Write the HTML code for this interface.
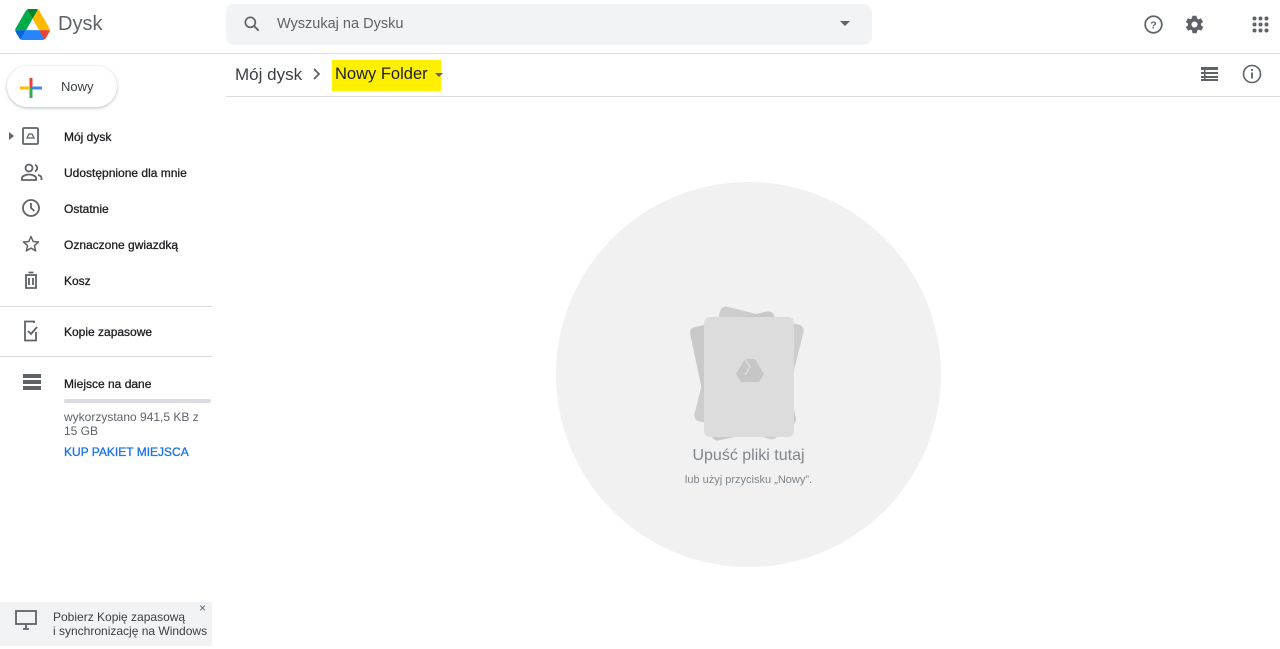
<!DOCTYPE html>
<html><head><meta charset="utf-8"><style>
*{margin:0;padding:0;box-sizing:border-box}
body{width:1280px;height:649px;overflow:hidden;background:#fff;font-family:"Liberation Sans",Arial,sans-serif;color:#3c4043;position:relative}
.abs{position:absolute}
.nav{position:absolute;left:64px;font-size:12px;color:#202124;-webkit-text-stroke:0.3px #202124}
.ic{position:absolute;left:21px}
</style></head><body>
<svg class="abs" style="left:15px;top:9px" width="35" height="31" viewBox="0 0 87 78"><path d="M6.6 66.85l3.85 6.65c.8 1.4 1.95 2.5 3.3 3.3L27.5 53H0c0 1.550.4 3.1 1.2 4.5z" fill="#0066da"/><path d="M43.65 25L29.9 1.2c-1.35.8-2.5 1.9-3.3 3.3L1.2 48.5A9 9 0 000 53h27.5z" fill="#00ac47"/><path d="M73.55 76.8c1.35-.8 2.5-1.9 3.3-3.3l1.6-2.75 7.65-13.25c.8-1.4 1.2-2.95 1.2-4.5H59.8l5.85 11.5z" fill="#ea4335"/><path d="M43.65 25L57.4 1.2C56.050.4 54.5 0 52.9 0H34.4c-1.6 0-3.150.45-4.5 1.2z" fill="#00832d"/><path d="M59.8 53H27.5L13.75 76.8c1.35.8 2.9 1.2 4.5 1.2h50.8c1.6 0 3.15-.45 4.5-1.2z" fill="#2684fc"/><path d="M73.4 26.5L60.7 4.5c-.8-1.4-1.95-2.5-3.3-3.3L43.65 25 59.8 53h27.45c0-1.55-.4-3.1-1.2-4.5z" fill="#ffba00"/></svg>
<div class="abs" style="left:58px;top:13px;font-size:20px;color:#5f6368">Dysk</div>
<div class="abs" style="left:226px;top:4px;width:646px;height:41px;background:#f1f3f4;border-radius:8px"></div>
<svg class="abs" style="left:242px;top:14px" width="20" height="20" viewBox="0 0 24 24"><circle cx="10" cy="10" r="6" fill="none" stroke="#5f6368" stroke-width="2"/><path d="M14.5 14.5L20 20" stroke="#5f6368" stroke-width="2.2"/></svg>
<div class="abs" style="left:277px;top:16px;font-size:14.5px;color:#5f6368">Wyszukaj na Dysku</div>
<div class="abs" style="left:840px;top:21px;border:5px solid transparent;border-top-color:#5f6368"></div>
<svg class="abs" style="left:1143px;top:14px" width="21" height="21" viewBox="0 0 24 24"><circle cx="12" cy="12" r="9.5" fill="none" stroke="#5f6368" stroke-width="2"/><text x="12" y="16.5" font-size="12" text-anchor="middle" fill="#5f6368" font-weight="bold" font-family="Liberation Sans">?</text></svg>
<svg class="abs" style="left:1184px;top:14px" width="21" height="21" viewBox="0 0 24 24"><path fill="#5f6368" d="M19.4 13c.04-.3.06-.6.06-1s-.02-.7-.06-1l2.1-1.6c.2-.15.24-.42.12-.64l-2-3.46c-.12-.22-.39-.3-.61-.22l-2.5 1c-.5-.4-1.1-.7-1.7-1l-.4-2.6A.5.5 0 0014 2h-4a.5.5 0 00-.5.42l-.4 2.6c-.6.3-1.2.6-1.7 1l-2.5-1a.5.5 0 00-.6.22l-2 3.46c-.13.22-.07.49.12.64L4.6 11c-.04.3-.06.65-.06 1s.02.7.06 1l-2.1 1.6c-.2.15-.24.42-.12.64l2 3.46c.12.22.39.3.61.22l2.5-1c.5.4 1.1.7 1.7 1l.4 2.6c.04.24.25.42.5.42h4c.25 0 .46-.18.5-.42l.4-2.6c.6-.3 1.2-.6 1.7-1l2.5 1c.23.09.49 0 .61-.22l2-3.46c.12-.22.07-.49-.12-.64zM12 15.5A3.5 3.5 0 1112 8.5a3.5 3.5 0 010 7z"/></svg>
<svg class="abs" style="left:1252px;top:16px" width="17" height="17" viewBox="0 0 17 17" fill="#5f6368"><circle cx="2.5" cy="2.5" r="2"/><circle cx="8.5" cy="2.5" r="2"/><circle cx="14.5" cy="2.5" r="2"/><circle cx="2.5" cy="8.5" r="2"/><circle cx="8.5" cy="8.5" r="2"/><circle cx="14.5" cy="8.5" r="2"/><circle cx="2.5" cy="14.5" r="2"/><circle cx="8.5" cy="14.5" r="2"/><circle cx="14.5" cy="14.5" r="2"/></svg>
<div class="abs" style="left:0;top:53px;width:1280px;height:1px;background:#dadce0"></div>
<div class="abs" style="left:7px;top:66px;width:110px;height:41px;border-radius:21px;box-shadow:0 1px 3px rgba(60,64,67,.35);background:#fff"></div>
<svg class="abs" style="left:20px;top:77px" width="22" height="22" viewBox="0 0 22 22"><rect x="9.5" y="1" width="3" height="10" fill="#ea4335"/><rect x="12" y="9.5" width="10" height="3" fill="#4285f4"/><rect x="9.5" y="11" width="3" height="10" fill="#34a853"/><rect x="0" y="9.5" width="10" height="3" fill="#fbbc04"/></svg>
<div class="abs" style="left:61px;top:79px;font-size:13px;color:#3c4043">Nowy</div>
<div class="abs" style="left:9px;top:132px;border:4px solid transparent;border-left:5px solid #5f6368"></div>
<svg class="ic" style="top:126px" width="20" height="20" viewBox="0 0 20 20"><rect x="2" y="2" width="15" height="16" rx="1" fill="none" stroke="#5f6368" stroke-width="1.8"/><path d="M6 12h7l-2-4h-3z" fill="none" stroke="#5f6368" stroke-width="1.3"/></svg>
<div class="nav" style="top:130px">Mój dysk</div>
<svg class="ic" style="top:163px" width="22" height="18" viewBox="0 0 22 18"><circle cx="8" cy="5" r="3.5" fill="none" stroke="#5f6368" stroke-width="1.8"/><path d="M1 17v-2c0-2 4-3.5 7-3.5s7 1.5 7 3.5v2z" fill="none" stroke="#5f6368" stroke-width="1.8"/><path d="M14 1.8a3.5 3.5 0 010 6.5M17 12c2 .5 3.5 1.5 3.5 3v2" fill="none" stroke="#5f6368" stroke-width="1.8"/></svg>
<div class="nav" style="top:166px">Udostępnione dla mnie</div>
<svg class="ic" style="top:198px" width="20" height="20" viewBox="0 0 20 20"><circle cx="10" cy="10" r="8" fill="none" stroke="#5f6368" stroke-width="1.8"/><path d="M10 5v5l3.5 3" fill="none" stroke="#5f6368" stroke-width="1.8"/></svg>
<div class="nav" style="top:202px">Ostatnie</div>
<svg class="ic" style="top:234px" width="20" height="20" viewBox="0 0 24 24"><path d="M12 3l2.6 6 6.4.6-4.9 4.3 1.5 6.3L12 16.9 6.4 20.2l1.5-6.3L3 9.6l6.4-.6z" fill="none" stroke="#5f6368" stroke-width="1.8" stroke-linejoin="round"/></svg>
<div class="nav" style="top:238px">Oznaczone gwiazdką</div>
<svg class="ic" style="top:270px" width="20" height="20" viewBox="0 0 20 20"><path d="M4 5h12M7.5 2.5h5M5 5v13h10V5M8 8v7M12 8v7" fill="none" stroke="#5f6368" stroke-width="1.8"/></svg>
<div class="nav" style="top:274px">Kosz</div>
<div class="abs" style="left:0;top:306px;width:212px;height:1px;background:#dadce0"></div>
<svg class="ic" style="top:320px" width="20" height="22" viewBox="0 0 20 22"><path d="M13 3V1.5H4v19h11V12" fill="none" stroke="#5f6368" stroke-width="1.8"/><path d="M7 11l3 3 6-7" fill="none" stroke="#5f6368" stroke-width="1.8"/></svg>
<div class="nav" style="top:325px">Kopie zapasowe</div>
<div class="abs" style="left:0;top:356px;width:212px;height:1px;background:#dadce0"></div>
<svg class="ic" style="top:374px;left:23px" width="18" height="16" viewBox="0 0 18 16" fill="#5f6368"><rect y="0" width="18" height="4"/><rect y="6" width="18" height="4"/><rect y="12" width="18" height="4"/></svg>
<div class="nav" style="top:377px">Miejsce na dane</div>
<div class="abs" style="left:64px;top:399px;width:147px;height:4px;background:#dadce0;border-radius:2px"></div>
<div class="abs" style="left:64px;top:410px;font-size:12px;line-height:14px;color:#5f6368;width:150px">wykorzystano 941,5 KB z 15 GB</div>
<div class="abs" style="left:64px;top:445px;font-size:12px;color:#1a73e8;-webkit-text-stroke:0.3px #1a73e8">KUP PAKIET MIEJSCA</div>
<div class="abs" style="left:0;top:602px;width:212px;height:44px;background:#f1f3f4"></div>
<svg class="abs" style="left:15px;top:610px" width="22" height="20" viewBox="0 0 22 20"><rect x="1" y="1" width="20" height="13" fill="none" stroke="#5f6368" stroke-width="1.8"/><path d="M8 19h6M11 14v5" stroke="#5f6368" stroke-width="1.8"/></svg>
<div class="abs" style="left:53px;top:610px;font-size:12px;line-height:14px;color:#3c4043">Pobierz Kopię zapasową<br>i synchronizację na Windows</div>
<div class="abs" style="left:199px;top:601px;font-size:12px;color:#5f6368">×</div>
<div class="abs" style="left:235px;top:65px;font-size:17px;color:#3c4043">Mój dysk</div>
<svg class="abs" style="left:310px;top:67px" width="14" height="14" viewBox="0 0 14 14"><path d="M4 2l5 5-5 5" fill="none" stroke="#5f6368" stroke-width="1.8"/></svg>
<div class="abs" style="left:332px;top:60px;width:109px;height:31px;background:#ffef00"></div>
<div class="abs" style="left:335px;top:65px;font-size:16.5px;color:#202124">Nowy Folder</div>
<div class="abs" style="left:435px;top:73px;border:4px solid transparent;border-top-color:#5f6368"></div>
<svg class="abs" style="left:1201px;top:67px" width="17" height="14" viewBox="0 0 17 14" fill="#5f6368"><rect width="17" height="3"/><rect y="5" width="17" height="2"/><rect y="9" width="17" height="2"/><rect y="12" width="17" height="2"/><rect x="3" width="1.5" height="14"/></svg>
<svg class="abs" style="left:1242px;top:64px" width="20" height="20" viewBox="0 0 20 20"><circle cx="10" cy="10" r="8.5" fill="none" stroke="#5f6368" stroke-width="1.6"/><rect x="9.1" y="8.5" width="1.8" height="6" fill="#5f6368"/><rect x="9.1" y="5" width="1.8" height="2" fill="#5f6368"/></svg>
<div class="abs" style="left:226px;top:96px;width:1054px;height:1px;background:#dadce0"></div>
<div class="abs" style="left:556px;top:182px;width:385px;height:385px;border-radius:50%;background:#f1f1f1"></div>
<div class="abs" style="left:706px;top:314px;width:86px;height:118px;background:#cdcdcd;border-radius:6px;transform:rotate(14deg)"></div>
<div class="abs" style="left:700px;top:318px;width:86px;height:116px;background:#c9c9c9;border-radius:6px;transform:rotate(-12deg)"></div>
<div class="abs" style="left:704px;top:317px;width:90px;height:120px;background:#dcdcdc;border-radius:6px"></div>
<svg class="abs" style="left:736px;top:358px" width="28" height="24" viewBox="0 0 28 24"><path d="M9 1h10l9 15-5 8H5L0 16z" fill="#c6c6c6"/><path d="M9 1l5 8-5 8" fill="none" stroke="#dcdcdc" stroke-width="1.5"/></svg>
<div class="abs" style="left:556px;top:447px;width:385px;text-align:center;font-size:16px;color:#80868b">Upuść pliki tutaj</div>
<div class="abs" style="left:556px;top:474px;width:385px;text-align:center;font-size:11px;color:#80868b">lub użyj przycisku „Nowy”.</div>
</body></html>
